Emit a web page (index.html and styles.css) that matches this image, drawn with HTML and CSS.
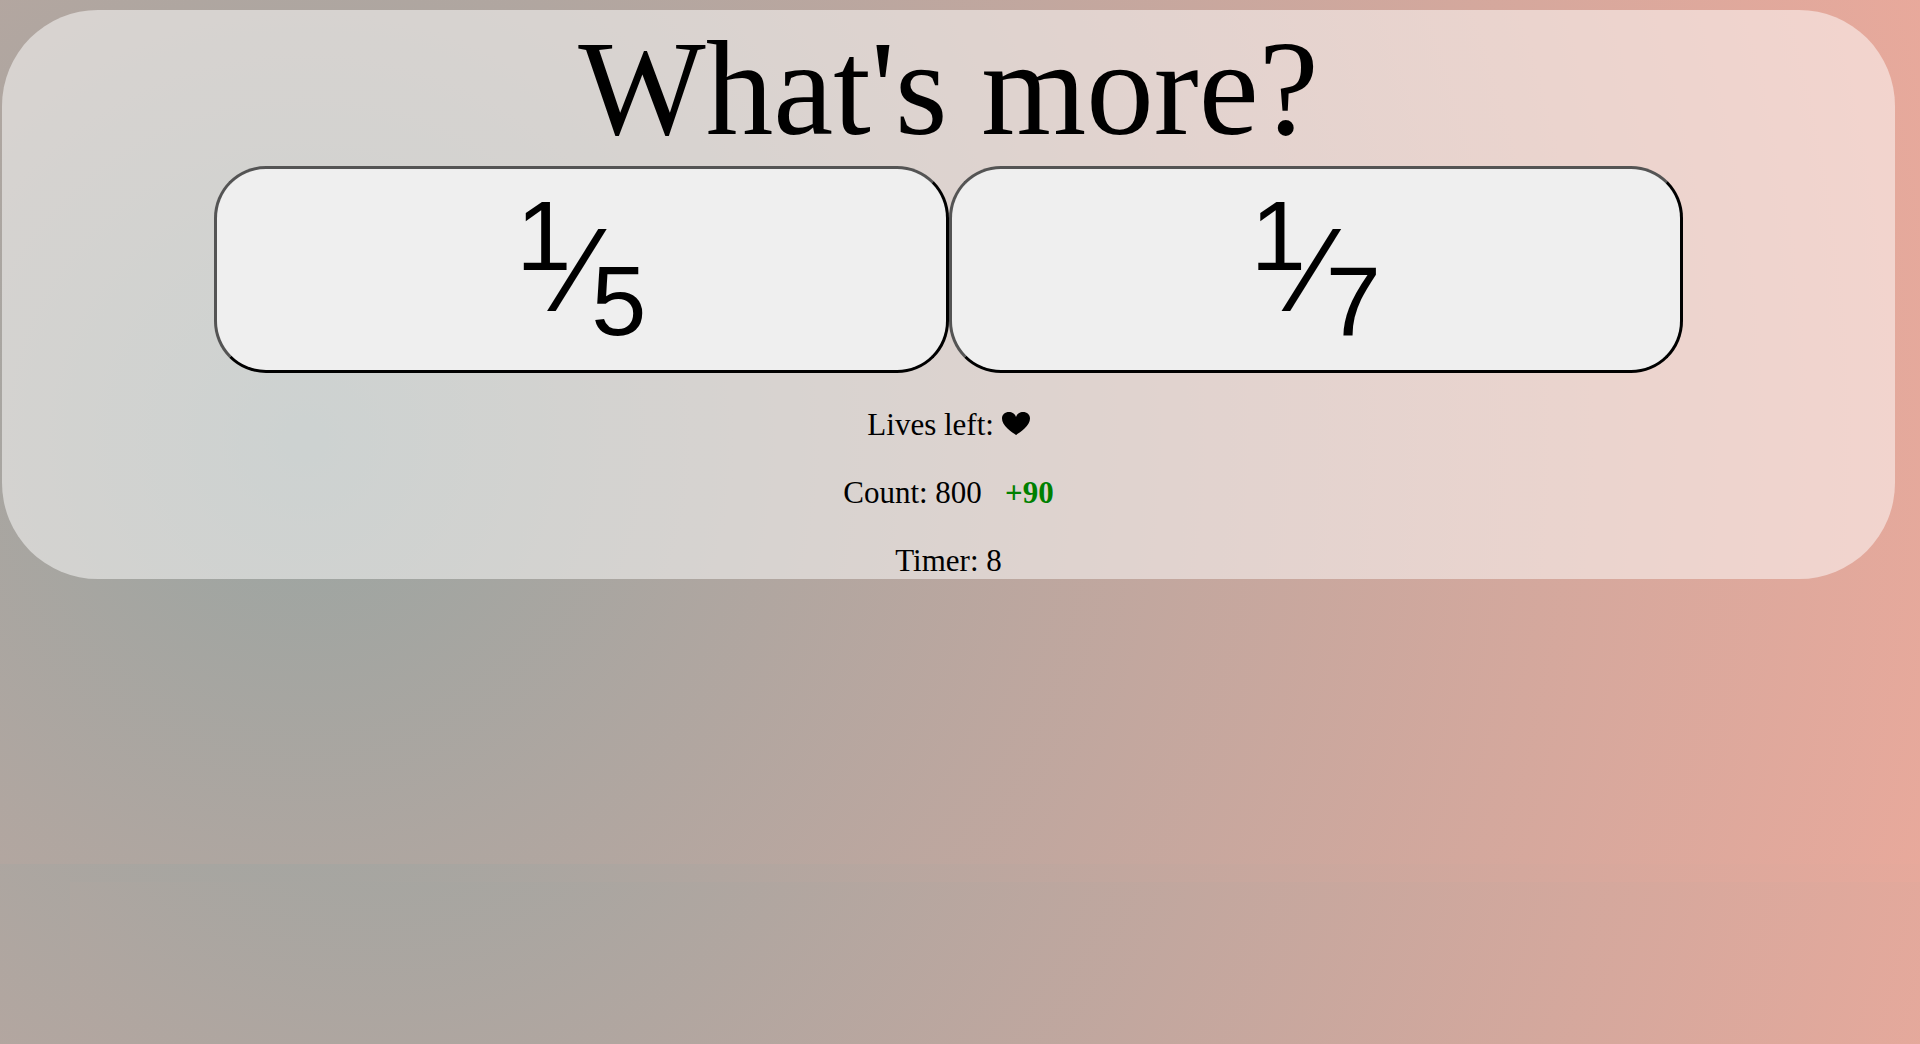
FILE: index.html
```html
<!DOCTYPE html>
<html lang="en">
<head>
<meta charset="utf-8">
<meta name="viewport" content="width=device-width, initial-scale=1">
<title>What's more?</title>
<link rel="stylesheet" href="styles.css">
</head>
<body>
<main class="panel">
  <h1 class="title">What's more?</h1>
  <div class="choices">
    <button class="choice" type="button"><sup>1</sup>&frasl;<sub>5</sub></button>
    <button class="choice" type="button"><sup>1</sup>&frasl;<sub>7</sub></button>
  </div>
  <div class="stats">
    <p class="stat">Lives left: <svg class="heart" viewBox="0 0 28 23" role="img" aria-label="1 life"><path d="M14 23C12 21.500 9 20 5.500 16.500C2 13 0 10 0 6.500C0 2.500 3 0 7 0C10 0 13 1.500 14 5C15 1.500 18 0 21 0C25 0 28 2.500 28 6.500C28 10 26 13 22.500 16.500C19 20 16 21.500 14 23Z"/></svg></p>
    <p class="stat">Count: 800&nbsp;&nbsp; <strong class="bonus">+90</strong></p>
    <p class="stat">Timer: 8</p>
  </div>
</main>
</body>
</html>
```
FILE: styles.css
```css
* {
  box-sizing: border-box;
}

html {
  min-height: 100%;
  background:
    radial-gradient(circle 1740px at 305px -270px, #9aa5a2, #eba99b) 70px 882px no-repeat,
    radial-gradient(circle 1740px at 305px -260px, #9aa5a2, #eba99b) 0 864px no-repeat,
    radial-gradient(circle 1740px at 305px 440px, #9aa5a2, #eba99b) no-repeat;
}

body {
  display: flow-root;
  margin: 0;
  color: #000;
  font-family: "Liberation Serif", "Times New Roman", serif;
  font-size: 31px;
  line-height: 36px;
}

.panel {
  margin: 10px 25px 0 2px;
  border-radius: 96px;
  background: rgba(255, 255, 255, 0.5);
  text-align: center;
}

.title {
  margin: 0;
  padding-top: 2px;
  font-size: 135px;
  font-weight: 400;
  line-height: 154px;
}

.choices {
  display: flex;
  padding: 0 212px;
}

.choice {
  flex: 1;
  height: 207px;
  padding: 0 0 2px;
  border: 3px outset #000;
  border-radius: 52px;
  background: #efefef;
  color: #000;
  font-family: "Liberation Sans", Arial, sans-serif;
  font-size: 119px;
}

.stats {
  display: flex;
  flex-direction: column;
  gap: 32px;
  padding-top: 34px;
}

.stat {
  margin: 0;
}

.heart {
  width: 28px;
  height: 23px;
  vertical-align: baseline;
}

.bonus {
  color: #008000;
}
```
